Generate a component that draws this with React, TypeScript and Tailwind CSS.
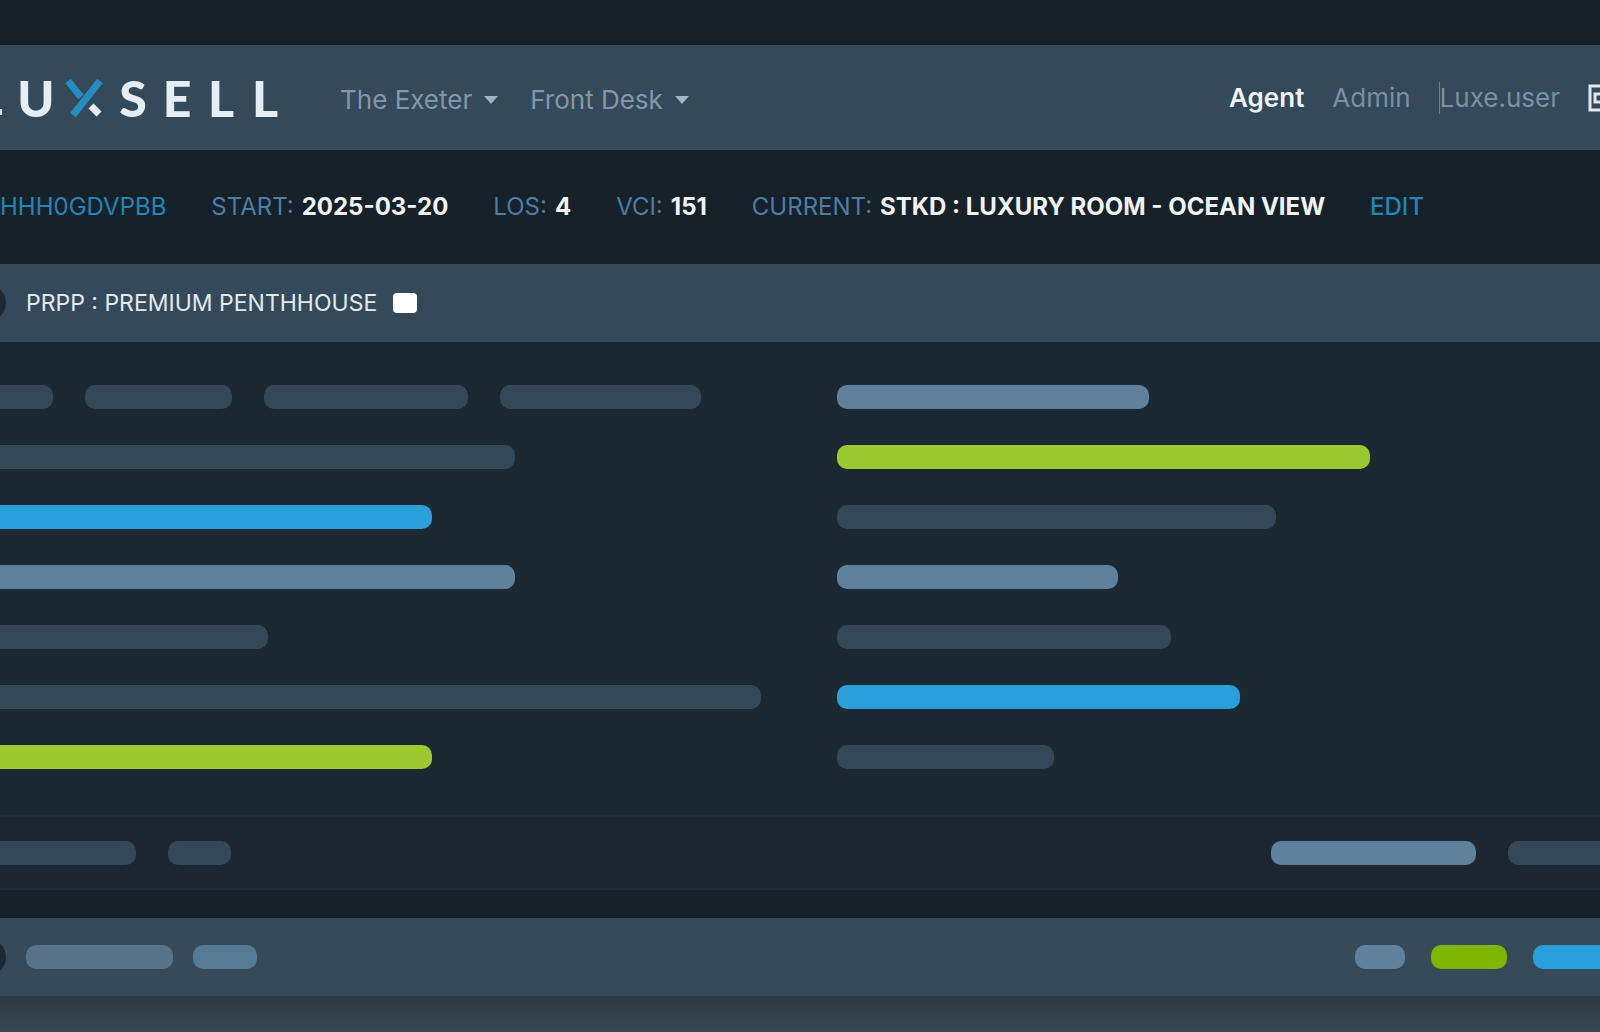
const FONT = "font-['Inter','Open_Sans',sans-serif]";

type Tone = "muted" | "soft" | "blue" | "green" | "lime";

const TONES: Record<Tone, string> = {
  muted: "bg-[#34485a]",
  soft: "bg-[#5f819c]",
  blue: "bg-[#2b9fd9]",
  green: "bg-[#9cc930]",
  lime: "bg-[#7db500]",
};

// cut: the bar runs in from the left edge of the window
function Bar({ w, tone = "muted", cut = false }: { w: number; tone?: Tone; cut?: boolean }) {
  return (
    <div
      className={`h-6 shrink-0 ${cut ? "rounded-r-[10px]" : "rounded-[10px]"} ${TONES[tone]}`}
      style={{ width: w }}
    />
  );
}

const LEFT_ROWS: { w: number; tone?: Tone }[] = [
  { w: 515 },
  { w: 432, tone: "blue" },
  { w: 515, tone: "soft" },
  { w: 268 },
  { w: 761 },
  { w: 432, tone: "green" },
];

const RIGHT_ROWS: { w: number; tone?: Tone }[] = [
  { w: 312, tone: "soft" },
  { w: 533, tone: "green" },
  { w: 439 },
  { w: 281, tone: "soft" },
  { w: 334 },
  { w: 403, tone: "blue" },
  { w: 217 },
];

function Logo() {
  return (
    <div className="flex items-center text-center font-['Lato',sans-serif] text-[50px] leading-none font-black text-[#e6eef5]">
      <span className="mr-3 mb-2 h-1.5 w-0.5 self-end bg-[#e6eef5]" />
      <span className="w-11">U</span>
      <svg width="53" height="40" viewBox="0 0 53 40" fill="none" strokeWidth="7">
        <path d="M10 3l13 16M42 3L15 37" stroke="#258cc0" />
        <path d="M33 28l8 8" stroke="#e6eef5" />
      </svg>
      <span className="w-11">S</span>
      <span className="w-11">E</span>
      <span className="w-11">L</span>
      <span className="w-11">L</span>
    </div>
  );
}

function Field({ label, value }: { label: string; value: string }) {
  return (
    <span className="flex gap-2">
      <span className="text-[#4d7da3]">{label}</span>
      <b className="text-[#f1f4f6]">{value}</b>
    </span>
  );
}

function NavMenu({ label }: { label: string }) {
  return (
    <button type="button" className="flex items-center gap-3">
      {label}
      <svg width="14" height="8" viewBox="0 0 16 9" fill="#a3b3c0">
        <path d="M0 0h16L8 9z" />
      </svg>
    </button>
  );
}

// round handle, mostly past the left edge
function EdgeDot() {
  return <span className="mr-5 -ml-[30px] size-9 shrink-0 rounded-full bg-[#1c2933]" />;
}

export default function App() {
  return (
    <div className={`min-h-screen overflow-hidden whitespace-nowrap bg-[#17212a] pt-[45px] text-[26px] leading-8 ${FONT}`}>
      <header className="flex h-[105px] items-center bg-[#34495a]">
        <Logo />
        <nav className="ml-[53px] flex gap-8 pt-1 text-[#8497a6]">
          <NavMenu label="The Exeter" />
          <NavMenu label="Front Desk" />
        </nav>
        <div className="ml-auto flex items-center gap-7 text-[#7b90a1]">
          <button type="button" className="font-semibold text-[#f1f4f6]">Agent</button>
          <button type="button">Admin</button>
          <a href="#user" className="border-l border-[#6c8192]">Luxe.user</a>
          <svg width="12" height="28" viewBox="0 0 12 28" fill="none" stroke="#dfe7ed" strokeWidth="3">
            <path d="M12 2H2v24h10M12 10H7v8h5" />
          </svg>
        </div>
      </header>

      <section className="flex h-[114px] items-center gap-[45px] text-2xl">
        <a href="#reservation" className="text-[#2385b8]">HHH0GDVPBB</a>
        <Field label="START:" value="2025-03-20" />
        <Field label="LOS:" value="4" />
        <Field label="VCI:" value="151" />
        <Field label="CURRENT:" value="STKD : LUXURY ROOM - OCEAN VIEW" />
        <button type="button" className="font-medium text-[#2385b8]">EDIT</button>
      </section>

      <main className="bg-[#1c2933]">
        <div className="flex h-[78px] items-center bg-[#34495a] text-[23px] text-[#e2e9ee]">
          <EdgeDot />
          PRPP : PREMIUM PENTHHOUSE
          <span className="ml-4 h-5 w-6 rounded bg-white" />
        </div>

        <div className="grid grid-cols-[52fr_48fr] pt-[43px] pb-[46px]">
          <div className="flex flex-col gap-9">
            <div className="flex gap-8">
              <Bar w={53} cut />
              <Bar w={147} />
              <Bar w={204} />
              <Bar w={201} />
            </div>
            {LEFT_ROWS.map((row, i) => (
              <Bar key={i} w={row.w} tone={row.tone} cut />
            ))}
          </div>
          <div className="flex flex-col gap-9 pl-[5px]">
            {RIGHT_ROWS.map((row, i) => (
              <Bar key={i} w={row.w} tone={row.tone} />
            ))}
          </div>
        </div>

        <footer className="flex h-[75px] items-center border-y-2 border-[#212e39] bg-[#1d2733]">
          <div className="flex gap-8">
            <Bar w={136} cut />
            <Bar w={63} />
          </div>
          <div className="ml-auto flex gap-8">
            <Bar w={205} tone="soft" />
            <div className="h-6 w-[92px] rounded-l-[10px] bg-[#34485a]" />
          </div>
        </footer>
      </main>

      <section className="mt-7">
        <div className="flex h-[78px] items-center bg-[#364a59]">
          <EdgeDot />
          <div className="flex gap-5">
            <div className="h-6 w-[147px] rounded-[10px] bg-[#587387]" />
            <div className="h-6 w-16 rounded-[10px] bg-[#557a94]" />
          </div>
          <div className="ml-auto flex gap-[26px]">
            <Bar w={50} tone="soft" />
            <Bar w={76} tone="lime" />
            <div className="h-6 w-[67px] rounded-l-[10px] bg-[#2b9fd9]" />
          </div>
        </div>
        <div className="h-9 bg-linear-to-b from-[#2d3941] to-[#374852]" />
      </section>
    </div>
  );
}
